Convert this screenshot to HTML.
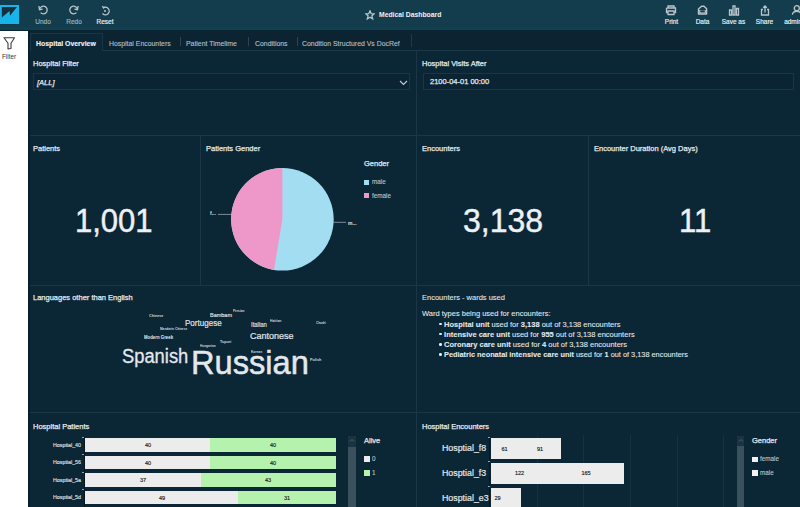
<!DOCTYPE html>
<html><head><meta charset="utf-8">
<style>
*{margin:0;padding:0;box-sizing:border-box}
html,body{width:800px;height:507px;overflow:hidden;background:#0b2635;font-family:"Liberation Sans",sans-serif;color:#e8ecef}
div,span,svg{position:absolute}
#top{left:0;top:0;width:800px;height:30px;background:#133d4c}
#topline{left:0;top:30px;width:800px;height:1px;background:#0c2432}
#logo{left:0;top:5px;width:19px;height:19px;background:#17b4ea}
.lbl{font-size:6.5px;line-height:7px;-webkit-text-stroke:0.15px currentColor;white-space:nowrap;text-align:center;width:40px;top:18px}
.ico{stroke:#b8c5cc;fill:none;stroke-width:1.3}
#side{left:0;top:31px;width:28px;height:476px;background:#fff}
#shadow{left:28px;top:31px;width:2px;height:476px;background:#08202c}
#tabs{left:30px;top:31px;width:770px;height:20px;background:#0c2432}
#tabline{left:30px;top:50px;width:770px;height:1px;background:#1c3a4a}
.tab{top:39.5px;font-size:6.9px;line-height:8px;color:#b3bfc7;-webkit-text-stroke:0.12px currentColor;white-space:nowrap}
.sep{top:37px;width:1px;height:9px;background:#2a4556}
.hl{background:#1b3747;height:1px}
.vl{background:#1b3747;width:1px}
.gl{background:#163242;width:1px}
.t{font-size:7.5px;line-height:8px;color:#e4e9ec;-webkit-text-stroke:0.25px #e4e9ec;white-space:nowrap}
.dot{display:inline-block;width:2.5px;height:2.5px;border-radius:50%;background:#e4e9ec;margin:0 2.4px 1.4px 0.2px;vertical-align:baseline}
.t2{font-size:7.5px;line-height:8px;color:#e4e9ec;-webkit-text-stroke:0.08px #e4e9ec;white-space:nowrap}
.kpi{font-size:33px;line-height:33px;color:#eef1f3;-webkit-text-stroke:0.45px #eef1f3;white-space:nowrap;transform-origin:0 0}
.box{border:1px solid #1a3646;background:#0a2433}
.w{color:#e4e8eb;white-space:nowrap;line-height:1}
.sm{color:#d0d7dc;font-weight:bold}
.ylab{font-size:5.3px;line-height:6px;color:#e0e5e8;-webkit-text-stroke:0.12px #e0e5e8;text-align:right;white-space:nowrap;width:60px}
.bar{height:13.8px}
.yl2{font-size:9.6px;line-height:10px;color:#e6eaed;-webkit-text-stroke:0.2px #e6eaed;white-space:nowrap;transform:scaleX(0.92);transform-origin:0 0}
.g{background:#ececec}
.gr{background:#b5f2ad}
.num{font-size:5.5px;line-height:6px;color:#1a1a1a;-webkit-text-stroke:0.15px #1a1a1a;white-space:nowrap;transform:translateX(-50%)}
.lg{font-size:6.3px;line-height:7px;color:#bec7cd;-webkit-text-stroke:0.1px #bec7cd;white-space:nowrap}
</style></head><body>
<div id="top"></div>
<div style="left:0;top:27px;width:800px;height:3px;background:#0f4150"></div>
<div id="topline"></div>
<div id="logo"></div>
<svg style="left:0;top:5px" width="19" height="19" viewBox="0 0 19 19"><path d="M1.8 2.1 L16.9 2.1 L10 10.8 L9.5 6 L1.8 12.4 Z" fill="#162f3c"/></svg>

<!-- toolbar left -->
<svg style="left:37px;top:5px" width="12" height="11" viewBox="0 0 12 11"><path class="ico" d="M2.6 4.6 A3.8 3.8 0 1 1 3.6 7.6"/><path class="ico" d="M1.9 1 L2.5 4.7 L5.6 4.2"/></svg>
<div class="lbl" style="left:23px;color:#a3b2ba">Undo</div>
<svg style="left:68px;top:5px" width="12" height="11" viewBox="0 0 12 11"><path class="ico" d="M9.4 4.6 A3.8 3.8 0 1 0 8.4 7.6"/><path class="ico" d="M10.1 1 L9.5 4.7 L6.4 4.2"/></svg>
<div class="lbl" style="left:54px;color:#a3b2ba">Redo</div>
<svg style="left:100px;top:5px" width="10" height="11" viewBox="0 0 10 11"><path class="ico" d="M3 3 A3.8 3.8 0 1 1 2.5 8.5"/><path class="ico" d="M2.5 1 L3.5 3 L5.5 2"/><circle cx="5" cy="6" r="1" fill="#b8c5cc"/></svg>
<div class="lbl" style="left:85px;color:#eef2f4">Reset</div>

<!-- title -->
<svg style="left:365px;top:10px" width="10" height="10" viewBox="0 0 10 10"><path class="ico" d="M5 0.8 L6.2 3.7 L9.2 3.8 L6.9 5.8 L7.7 8.9 L5 7.2 L2.3 8.9 L3.1 5.8 L0.8 3.8 L3.8 3.7 Z"/></svg>
<div style="left:379px;top:11px;font-size:6.8px;line-height:7px;font-weight:bold;color:#eef2f4;white-space:nowrap">Medical Dashboard</div>

<!-- toolbar right -->
<svg style="left:665px;top:5px" width="12" height="11" viewBox="0 0 12 11"><path class="ico" d="M3 3 V1 H9 V3 M1.5 3 H10.5 V7.5 H9 M3 7.5 H1.5 V3 M3 6 H9 V9.5 H3 Z"/></svg>
<div class="lbl" style="left:651.5px;color:#eef2f4">Print</div>
<svg style="left:697px;top:5px" width="11" height="10" viewBox="0 0 11 10"><path d="M1.5 4 L4.5 1.3 H7 L9.6 3.8 V9 H1.5 Z" fill="none" stroke="#b8c5cc" stroke-width="1.4" stroke-linejoin="round"/><path d="M2.2 5 H8.9 V8.4 H2.2 Z" fill="#b8c5cc"/><path d="M3.3 5.3 H7.8 V7.4 H3.3 Z" fill="#143c4b"/></svg>
<div class="lbl" style="left:682.5px;color:#eef2f4">Data</div>
<svg style="left:728px;top:4.8px" width="12" height="11" viewBox="0 0 12 11"><path class="ico" d="M1.5 5 H3.5 V10 H1.5 Z M5 1 H7 V10 H5 Z M8.5 3.5 H10.5 V10 H8.5 Z"/></svg>
<div class="lbl" style="left:713.5px;color:#eef2f4">Save as</div>
<svg style="left:760px;top:4.5px" width="10" height="11" viewBox="0 0 10 11"><path class="ico" d="M3 4.5 H1.5 V10 H8.5 V4.5 H7 M5 7.5 V1 M3.2 2.8 L5 1 L6.8 2.8"/></svg>
<div class="lbl" style="left:744.5px;color:#eef2f4">Share</div>
<svg style="left:790px;top:5px" width="12" height="11" viewBox="0 0 12 11"><circle class="ico" cx="6.8" cy="3.2" r="2.5"/><path class="ico" d="M2.3 9.6 A4.6 4.2 0 0 1 11.3 9.6"/></svg>
<div class="lbl" style="left:773px;color:#eef2f4">admin</div>

<!-- sidebar -->
<div id="side"></div>
<div id="shadow"></div>
<svg style="left:3px;top:37px" width="12" height="13" viewBox="0 0 12 13"><path d="M1 0.8 H11.5 L8 6.3 V11.5 L5 12 V6.3 Z" fill="none" stroke="#3a3a3a" stroke-width="1.1" stroke-linejoin="round"/></svg>
<div style="left:2px;top:53px;font-size:6.3px;line-height:7px;color:#333;white-space:nowrap">Filter</div>

<!-- tabs -->
<div id="tabs"></div>
<div style="left:30px;top:33px;width:73px;height:18px;background:#0b2635;border:1px solid #1a3545;border-bottom:none"></div>
<div id="tabline" style="left:103px;width:697px"></div>
<div class="tab" style="left:36px;color:#f0f3f5;font-weight:bold">Hospital Overview</div>
<div class="tab" style="left:109px">Hospital Encounters</div>
<div class="sep" style="left:180px"></div>
<div class="tab" style="left:186px">Patient Timelime</div>
<div class="sep" style="left:248px"></div>
<div class="tab" style="left:255px">Conditions</div>
<div class="sep" style="left:297px"></div>
<div class="tab" style="left:302px">Condition Structured Vs DocRef</div>
<div class="sep" style="left:411px;top:34px;height:13px;background:#1f3a4a"></div>

<!-- grid -->
<div class="hl" style="left:30px;top:135px;width:770px"></div>
<div class="hl" style="left:30px;top:285px;width:770px"></div>
<div class="hl" style="left:30px;top:412px;width:770px"></div>
<div class="vl" style="left:416px;top:51px;height:456px"></div>
<div class="vl" style="left:200px;top:135px;height:150px"></div>
<div class="vl" style="left:588px;top:135px;height:150px"></div>

<!-- row1 -->
<div class="t" style="left:33px;top:60px">Hospital Filter</div>
<div class="box" style="left:33px;top:73px;width:377px;height:17px"></div>
<div class="t" style="left:37px;top:78.5px;font-style:italic">[ALL]</div>
<svg style="left:399px;top:79.5px" width="9" height="6" viewBox="0 0 9 6"><path d="M1 1 L4.5 4.5 L8 1" fill="none" stroke="#c5cfd5" stroke-width="1.1"/></svg>
<div class="t" style="left:422px;top:60px">Hospital Visits After</div>
<div class="box" style="left:423px;top:73px;width:370.5px;height:17px"></div>
<div class="t" style="left:430px;top:78px">2100-04-01 00:00</div>

<!-- row2 -->
<div class="t" style="left:33px;top:145px">Patients</div>
<div class="t" style="left:206px;top:145px">Patients Gender</div>
<div class="t" style="left:422px;top:145px">Encounters</div>
<div class="t" style="left:594px;top:145px">Encounter Duration (Avg Days)</div>
<div class="kpi" style="left:74.5px;top:203.7px;transform:scaleX(0.94)">1,001</div>
<div class="kpi" style="left:463px;top:203.7px;transform:scaleX(0.97)">3,138</div>
<div class="kpi" style="left:679px;top:203.7px;transform:scaleX(0.94)">11</div>

<svg style="left:200px;top:135px" width="216" height="150" viewBox="0 0 216 150">
  <circle cx="82.4" cy="84.3" r="51.3" fill="#a3ddf1"/>
  <path d="M82.4 84.3 L82.4 33 A51.3 51.3 0 0 0 74 134.9 Z" fill="#ee98c9"/>
  <path d="M18 79.4 H31.5" stroke="#c9ced8" stroke-width="0.6"/>
  <path d="M133.2 87.3 H146" stroke="#c9ced8" stroke-width="0.6"/>
</svg>
<div style="left:210px;top:210px;font-size:5px;line-height:6px;color:#e2e7ea;font-weight:bold">f...</div>
<div style="left:348px;top:220px;font-size:5px;line-height:6px;color:#e2e7ea;font-weight:bold">m...</div>
<div class="t" style="left:364px;top:159.7px">Gender</div>
<div style="left:364px;top:179.5px;width:5px;height:5px;background:#a3ddf1"></div>
<div class="lg" style="left:372px;top:178px">male</div>
<div style="left:364px;top:193px;width:5px;height:5px;background:#ee98c9"></div>
<div class="lg" style="left:372px;top:191.5px">female</div>

<!-- row3 -->
<div class="t" style="left:33px;top:294px">Languages other than English</div>
<div class="w sm" style="left:149.2px;top:314px;font-size:4.2px;transform:scaleX(0.88);transform-origin:0 0">Chinese</div>
<div class="w" style="left:210.4px;top:312px;font-size:6.1px;transform:scaleX(0.9);transform-origin:0 0;-webkit-text-stroke:0.15px #e4e8eb">Bambam</div>
<div class="w sm" style="left:233.2px;top:310.3px;font-size:3.7px;transform:scaleX(0.86);transform-origin:0 0">Persian</div>
<div class="w" style="left:184.6px;top:318.6px;font-size:8.4px;transform:scaleX(0.96);transform-origin:0 0;-webkit-text-stroke:0.15px #e4e8eb">Portugese</div>
<div class="w sm" style="left:159.7px;top:327.9px;font-size:3.5px;transform:scaleX(0.9);transform-origin:0 0">Mandarin Chinese</div>
<div class="w sm" style="left:269.7px;top:319.6px;font-size:3.8px;transform:scaleX(0.9);transform-origin:0 0">Haitian</div>
<div class="w sm" style="left:315.9px;top:321.7px;font-size:3.8px;transform:scaleX(0.8);transform-origin:0 0">Chodri</div>
<div class="w" style="left:251px;top:321.9px;font-size:6.4px;transform:scaleX(0.93);transform-origin:0 0;-webkit-text-stroke:0.12px #e4e8eb">Italian</div>
<div class="w" style="left:144.2px;top:335.6px;font-size:4.8px;font-weight:bold;transform:scaleX(0.9);transform-origin:0 0">Modern Greek</div>
<div class="w" style="left:249.7px;top:330.8px;font-size:9.8px;transform:scaleX(0.92);transform-origin:0 0;-webkit-text-stroke:0.2px #e4e8eb">Cantonese</div>
<div class="w sm" style="left:200px;top:344.8px;font-size:3.5px;transform:scaleX(0.9);transform-origin:0 0">Hungarian</div>
<div class="w sm" style="left:220px;top:341.3px;font-size:3.7px">Tupuri</div>
<div class="w sm" style="left:251.3px;top:350.9px;font-size:3.5px;transform:scaleX(0.92);transform-origin:0 0">Korean</div>
<div class="w sm" style="left:309.8px;top:357.6px;font-size:4px;transform:scaleX(0.95);transform-origin:0 0">Polish</div>
<div class="w" style="left:122.3px;top:347.2px;font-size:19.5px;-webkit-text-stroke:0.3px #e4e8eb;transform:scaleX(0.94);transform-origin:0 0">Spanish</div>
<div class="w" style="left:191.2px;top:344.7px;font-size:34px;-webkit-text-stroke:0.5px #e4e8eb;transform:scaleX(0.96);transform-origin:0 0">Russian</div>

<div class="t2" style="left:422px;top:294.3px">Encounters - wards used</div>
<div class="t2" style="left:422px;top:310.3px">Ward types being used for encounters:</div>
<div class="t2" style="left:439px;top:320.5px"><i class="dot"></i><b>Hospital unit</b> used for <b>3,138</b> out of 3,138 encounters</div>
<div class="t2" style="left:439px;top:330.8px"><i class="dot"></i><b>Intensive care unit</b> used for <b>955</b> out of 3,138 encounters</div>
<div class="t2" style="left:439px;top:341px"><i class="dot"></i><b>Coronary care unit</b> used for <b>4</b> out of 3,138 encounters</div>
<div class="t2" style="left:439px;top:351.2px;transform:scaleX(0.98);transform-origin:0 0"><i class="dot"></i><b>Pediatric neonatal intensive care unit</b> used for <b>1</b> out of 3,138 encounters</div>

<!-- row4 left -->
<div class="t" style="left:33px;top:422.5px">Hospital Patients</div>
<div style="left:83.7px;top:436.5px;width:1.3px;height:71px;background:#061720"></div>
<div style="left:82px;top:436.5px;width:2px;height:1px;background:#9aa5ab"></div>
<div style="left:82px;top:454px;width:2px;height:1px;background:#9aa5ab"></div>
<div style="left:82px;top:471.5px;width:2px;height:1px;background:#9aa5ab"></div>
<div style="left:82px;top:489px;width:2px;height:1px;background:#9aa5ab"></div>
<div class="ylab" style="left:21px;top:441.5px">Hosptial_40</div>
<div class="bar g" style="left:85px;top:438.3px;width:125px"></div>
<div class="bar gr" style="left:210px;top:438.3px;width:126px"></div>
<div class="num" style="left:148px;top:442px">40</div>
<div class="num" style="left:273px;top:442px">40</div>
<div class="ylab" style="left:21px;top:459px">Hosptial_56</div>
<div class="bar g" style="left:85px;top:455.7px;width:125px"></div>
<div class="bar gr" style="left:210px;top:455.7px;width:126px"></div>
<div class="num" style="left:148px;top:459.5px">40</div>
<div class="num" style="left:273px;top:459.5px">40</div>
<div class="ylab" style="left:21px;top:476.5px">Hosptial_5a</div>
<div class="bar g" style="left:85px;top:473.2px;width:116px"></div>
<div class="bar gr" style="left:201px;top:473.2px;width:135px"></div>
<div class="num" style="left:143px;top:477px">37</div>
<div class="num" style="left:268px;top:477px">43</div>
<div class="ylab" style="left:21px;top:494px">Hosptial_5d</div>
<div class="bar g" style="left:85px;top:490.6px;width:153px"></div>
<div class="bar gr" style="left:238px;top:490.6px;width:98px"></div>
<div class="num" style="left:162px;top:494.5px">49</div>
<div class="num" style="left:287px;top:494.5px">31</div>
<div style="left:348px;top:436.3px;width:8px;height:71px;background:#3a515d"></div>
<div style="left:348px;top:436.3px;width:8px;height:10.5px;background:#1b3240"></div>
<svg style="left:349px;top:438px" width="6" height="5" viewBox="0 0 6 5"><path d="M1 3.5 L3 1.5 L5 3.5" fill="none" stroke="#55707c" stroke-width="0.8"/></svg>
<div class="t" style="left:364px;top:437px">Alive</div>
<div style="left:364px;top:456.2px;width:5.5px;height:5.5px;background:#ececec"></div>
<div class="lg" style="left:372px;top:455px">0</div>
<div style="left:364px;top:470px;width:5.5px;height:5.5px;background:#b5f2ad"></div>
<div class="lg" style="left:372px;top:469px">1</div>

<!-- row4 right -->
<div class="t" style="left:422px;top:422.5px">Hospital Encounters</div>
<div class="gl" style="left:536.5px;top:435px;height:72px"></div>
<div class="gl" style="left:583px;top:435px;height:72px"></div>
<div class="gl" style="left:630px;top:435px;height:72px"></div>
<div class="gl" style="left:676.5px;top:435px;height:72px"></div>
<div class="gl" style="left:723px;top:435px;height:72px"></div>
<div style="left:489.2px;top:436.5px;width:1.3px;height:71px;background:#061720"></div>
<div style="left:488px;top:436.5px;width:2px;height:1px;background:#9aa5ab"></div>
<div style="left:488px;top:461px;width:2px;height:1px;background:#9aa5ab"></div>
<div style="left:488px;top:485.5px;width:2px;height:1px;background:#9aa5ab"></div>
<div class="bar g" style="left:490.5px;top:438px;width:70.5px;height:21px"></div>
<div class="bar g" style="left:490.5px;top:462.6px;width:133.5px;height:21.2px"></div>
<div class="bar g" style="left:490.5px;top:488px;width:30.5px;height:20px"></div>
<div class="yl2" style="left:442px;top:443.2px">Hosptial_f8</div>
<div class="yl2" style="left:442px;top:467.5px">Hosptial_f3</div>
<div class="yl2" style="left:442px;top:492.6px">Hosptial_e3</div>
<div class="num" style="left:504.5px;top:446px">61</div>
<div class="num" style="left:540px;top:446px">91</div>
<div class="num" style="left:519.5px;top:470px">122</div>
<div class="num" style="left:586px;top:470px">165</div>
<div class="num" style="left:497.5px;top:494.5px">29</div>
<div style="left:736.6px;top:436.4px;width:7.5px;height:71px;background:#3a515d"></div>
<div style="left:736.6px;top:436.4px;width:7.5px;height:10px;background:#1b3240"></div>
<svg style="left:737.5px;top:438px" width="6" height="5" viewBox="0 0 6 5"><path d="M1 3.5 L3 1.5 L5 3.5" fill="none" stroke="#55707c" stroke-width="0.8"/></svg>
<div class="t" style="left:752px;top:437px">Gender</div>
<div style="left:752px;top:456.5px;width:5.5px;height:5.5px;background:#f2f2f2"></div>
<div class="lg" style="left:760px;top:455px">female</div>
<div style="left:752px;top:470px;width:5.5px;height:5.5px;background:#f2f2f2"></div>
<div class="lg" style="left:760px;top:469px">male</div>
</body></html>
